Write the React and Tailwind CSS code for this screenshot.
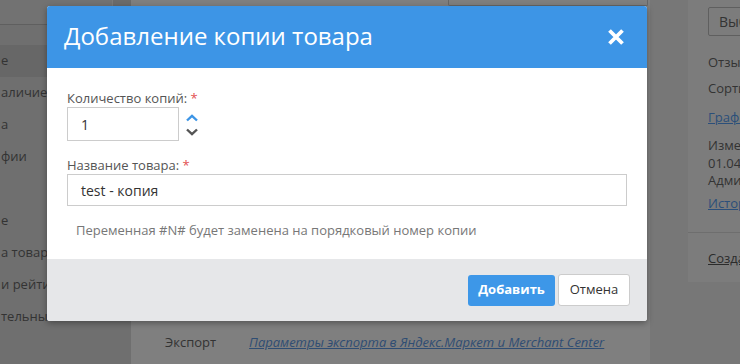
import React from "react";

const font = { fontFamily: '"Open Sans", "Noto Sans", sans-serif' };

function SideItem({ text, active }) {
  return (
    <div
      className={`h-[32px] flex items-center whitespace-nowrap text-[13px] text-[#333333] pl-[1px] ${
        active ? "bg-[#676767]" : ""
      }`}
    >
      {text}
    </div>
  );
}

export default function App() {
  return (
    <div
      className="relative w-[740px] h-[364px] overflow-hidden flex bg-[#7f7f7f]"
      style={font}
    >
      {/* left sidebar */}
      <div className="w-[131px] shrink-0 bg-[#6f6f6f] flex flex-col">
        <div className="h-[25px] flex border-b border-[#5f5f5f]">
          <div className="w-[113px] border-r border-[#7a7a7a] bg-[#727272]" />
          <div className="flex-1 bg-[#6b6b6b]" />
        </div>
        <div className="h-[20px]" />
        <SideItem text="е" active />
        <SideItem text="аличие" />
        <SideItem text="а" />
        <SideItem text="фии" />
        <SideItem text="" />
        <SideItem text="е" />
        <SideItem text="а товара" />
        <SideItem text="и рейти" />
        <SideItem text="тельны" />
      </div>

      {/* main column */}
      <div className="w-[519px] shrink-0 flex flex-col">
        <div className="h-[6px] flex justify-end pr-[2px]">
          <div className="w-[200px] h-[6px] border-x border-b border-[#666666] rounded-b-[2px]" />
        </div>
        <div className="flex-1" />
        <div className="h-[38px] flex items-center text-[13px] pb-[4px]">
          <span className="ml-[34px] text-[#333333]">Экспорт</span>
          <span className="ml-[33px] italic underline text-[#2f4d73] whitespace-nowrap">
            Параметры экспорта в Яндекс.Маркет и Merchant Center
          </span>
        </div>
      </div>

      {/* right column */}
      <div className="flex-1 bg-[#777777] flex">
        <div className="w-[38px] shrink-0" />
        <div className="flex-1 h-[282px] bg-[#7c7c7c] overflow-hidden pl-[20px] text-[13px] text-[#333333] whitespace-nowrap">
          <div className="mt-[7px] h-[29px] w-[120px] border border-[#5f5f5f] rounded-[2px] flex items-center pl-[10px] text-[14px]">
            Выберите
          </div>
          <div className="mt-[17px] leading-[18px]">Отзывы</div>
          <div className="mt-[8px] leading-[18px]">Сортировка</div>
          <div className="mt-[11px] leading-[18px] underline text-[#2b4f7a]">График</div>
          <div className="mt-[11px] leading-[17.5px]">
            <div>Изменено</div>
            <div>01.04.2024</div>
            <div>Администратор</div>
          </div>
          <div className="mt-[4px] leading-[18px] underline text-[#2b4f7a]">История</div>
          <div className="mt-[20px] -ml-[20px] border-t border-[#6e6e6e]" />
          <div className="mt-[16px] leading-[18px] underline text-[#2b2b2b]">Создать</div>
        </div>
      </div>

      {/* modal */}
      <div className="absolute left-[47px] top-[6px] w-[600px] rounded-[3px] overflow-hidden bg-white shadow-[0_2px_6px_rgba(0,0,0,0.35)]">
        <div className="h-[62px] bg-[#3d95e6] flex items-center justify-between pl-[17px] pr-[22px]">
          <span className="text-[24px] text-white leading-none pb-[2px]">
            Добавление копии товара
          </span>
          <svg width="18" height="18" viewBox="0 0 18 18" className="mb-[1px]">
            <path
              d="M2.5 2.5 L15.5 15.5 M15.5 2.5 L2.5 15.5"
              stroke="#ffffff"
              strokeWidth="3.8"
              strokeLinecap="butt"
            />
          </svg>
        </div>

        <div className="pt-[21px] pb-[20px] px-[20px]">
          <div className="h-[18px] text-[13px] leading-[18px] text-[#555555]">
            Количество копий: <span className="text-[#e25050]">*</span>
          </div>
          <div className="flex items-center">
            <div className="w-[112px] h-[34px] border border-[#cccccc] flex items-center pl-[13px] text-[14px] text-[#333333]">
              1
            </div>
            <div className="ml-[7px] flex flex-col gap-[6px] pt-[2px]">
              <svg width="12" height="8" viewBox="0 0 12 8">
                <path d="M1 6.5 L6 1.8 L11 6.5" fill="none" stroke="#3d95e6" strokeWidth="2.4" />
              </svg>
              <svg width="12" height="8" viewBox="0 0 12 8">
                <path d="M1 1.5 L6 6.2 L11 1.5" fill="none" stroke="#555555" strokeWidth="2.4" />
              </svg>
            </div>
          </div>

          <div className="mt-[15px] h-[18px] text-[13px] leading-[18px] text-[#555555]">
            Название товара: <span className="text-[#e25050]">*</span>
          </div>
          <div className="w-[560px] h-[32px] border border-[#cccccc] flex items-center pl-[13px] text-[14px] text-[#333333]">
            test - копия
          </div>

          <div className="mt-[15px] pl-[9px] h-[18px] text-[13px] leading-[18px] text-[#777777]">
            Переменная #N# будет заменена на порядковый номер копии
          </div>
        </div>

        <div className="h-[62px] bg-[#e6e7e9] flex items-center justify-end pr-[17px] gap-[3px]">
          <button className="w-[87px] h-[31px] rounded-[3px] bg-[#3d97e8] text-white text-[13px] font-bold">
            Добавить
          </button>
          <button className="w-[72px] h-[32px] rounded-[3px] bg-white border border-[#cccccc] text-[#333333] text-[13px]">
            Отмена
          </button>
        </div>
      </div>
    </div>
  );
}
